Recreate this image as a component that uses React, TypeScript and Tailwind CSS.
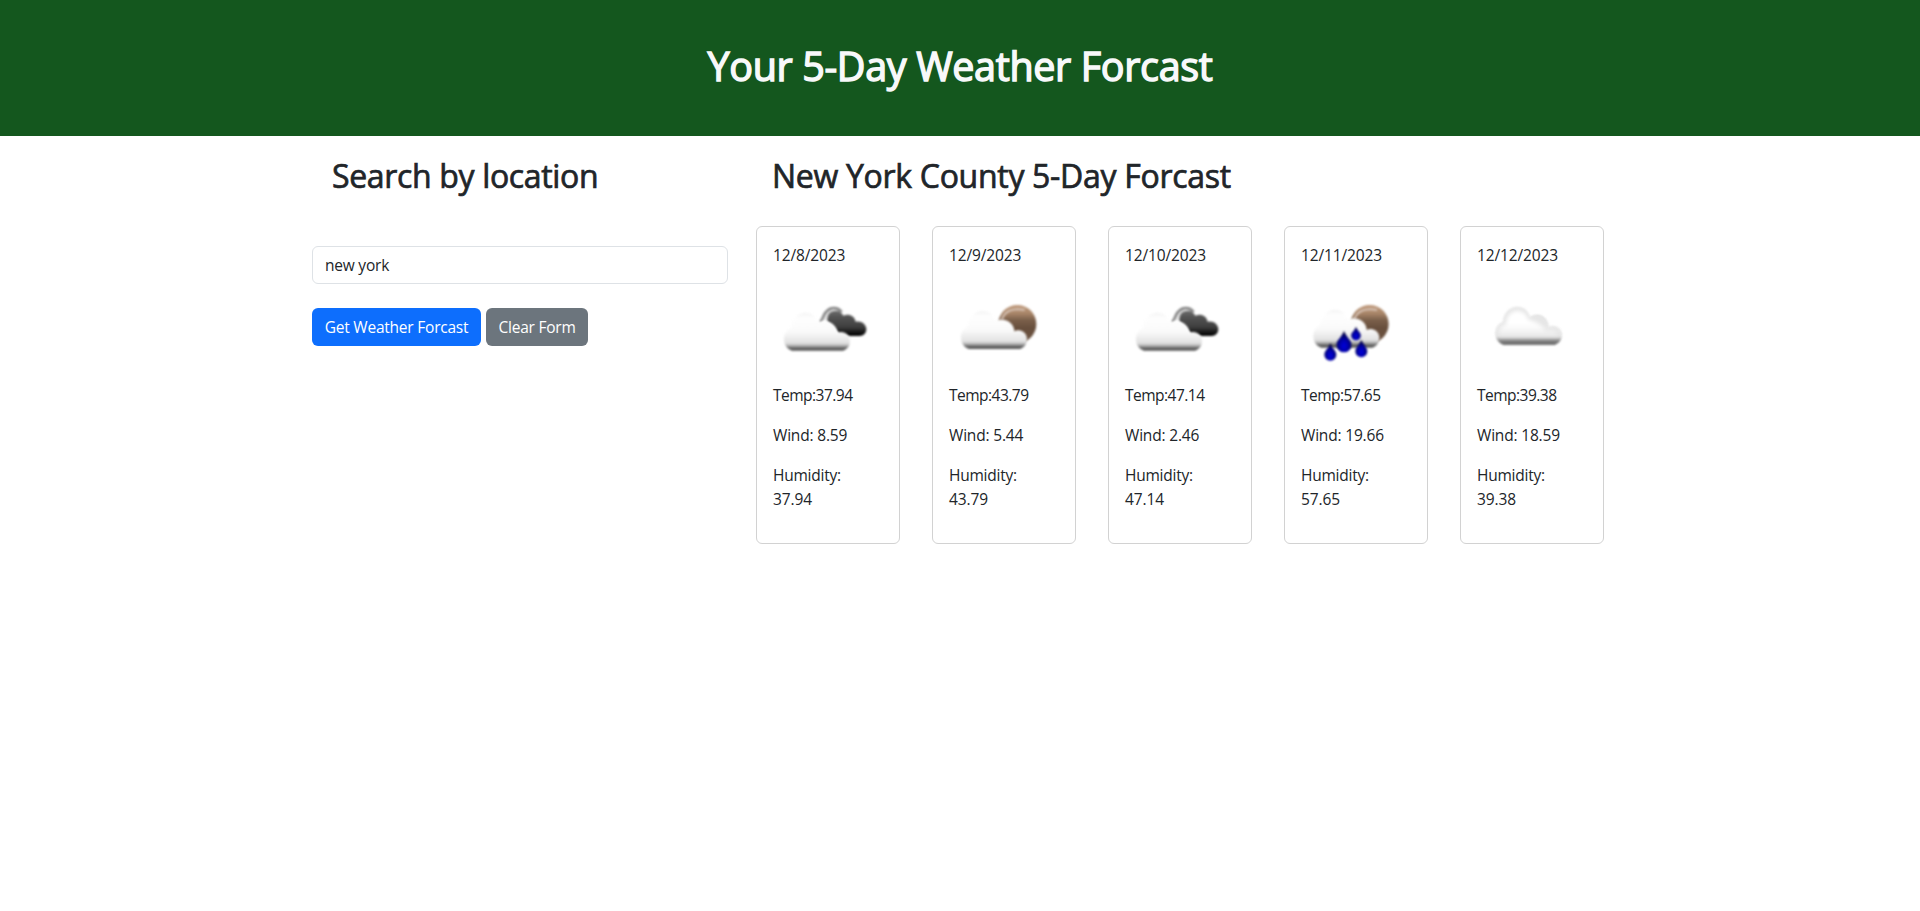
import { useState } from "react";

type Sky = "broken" | "scattered" | "rain" | "cloudy";

type Day = {
  date: string;
  sky: Sky;
  temp: string;
  wind: string;
  humidity: string;
};

const days: Day[] = [
  { date: "12/8/2023", sky: "broken", temp: "37.94", wind: "8.59", humidity: "37.94" },
  { date: "12/9/2023", sky: "scattered", temp: "43.79", wind: "5.44", humidity: "43.79" },
  { date: "12/10/2023", sky: "broken", temp: "47.14", wind: "2.46", humidity: "47.14" },
  { date: "12/11/2023", sky: "rain", temp: "57.65", wind: "19.66", humidity: "57.65" },
  { date: "12/12/2023", sky: "cloudy", temp: "39.38", wind: "18.59", humidity: "39.38" },
];

const cloudPath =
  "M72 177C55 172 46 155 48 137C50 122 58 114 70 108C70 85 88 63 113 63C132 63 146 75 151 93C163 86 182 87 193 96C203 104 208 113 208 124C226 115 246 128 246 147C246 160 240 172 225 177Z";

function Cloud({ id, x = 0, y = 0 }: { id: string; x?: number; y?: number }) {
  return (
    <g transform={`translate(${x} ${y})`}>
      <path d={cloudPath} fill={`url(#${id}-cloud)`} filter={`url(#${id}-soft)`} />
    </g>
  );
}

function Sun({ id, cx, cy }: { id: string; cx: number; cy: number }) {
  return (
    <g filter={`url(#${id}-soft)`}>
      <circle cx={cx} cy={cy} r="57" fill={`url(#${id}-sun)`} />
      <path
        d={`M${cx - 46} ${cy - 14}C${cx - 38} ${cy - 38} ${cx - 14} ${cy - 50} ${cx + 22} ${cy - 42}`}
        fill="none"
        stroke="#d6c3b6"
        strokeWidth="6"
      />
    </g>
  );
}

function Drop({ id, x, y, w, h }: { id: string; x: number; y: number; w: number; h: number }) {
  const r = w / 2;
  return (
    <path
      d={`M${x} ${y}C${x + r * 0.35} ${y + h * 0.32} ${x + r} ${y + h * 0.42} ${x + r} ${y + h - r}A${r} ${r} 0 0 1 ${x - r} ${y + h - r}C${x - r} ${y + h * 0.42} ${x - r * 0.35} ${y + h * 0.32} ${x} ${y}Z`}
      fill={`url(#${id}-drop)`}
      filter={`url(#${id}-soft)`}
    />
  );
}

const viewBoxes: Record<Sky, string> = {
  broken: "9 -21 300 300",
  scattered: "12 -21 300 300",
  rain: "3 -21 300 300",
  cloudy: "6 -21 300 300",
};

function WeatherIcon({ sky, id }: { sky: Sky; id: string }) {
  return (
    <svg viewBox={viewBoxes[sky]} className="block size-[100px]" aria-hidden="true">
      <defs>
        <filter id={`${id}-soft`} x="-20%" y="-20%" width="140%" height="140%" colorInterpolationFilters="sRGB">
          <feGaussianBlur stdDeviation="2.6" />
        </filter>
        <filter id={`${id}-wide`} x="-20%" y="-20%" width="140%" height="140%" colorInterpolationFilters="sRGB">
          <feGaussianBlur stdDeviation="6" />
        </filter>
        <linearGradient id={`${id}-cloud`} gradientUnits="userSpaceOnUse" x1="0" y1="63" x2="0" y2="177">
          <stop offset="0" stopColor="#f4f4f4" />
          <stop offset="0.15" stopColor="#fefefe" />
          <stop offset="0.5" stopColor="#fafafa" />
          <stop offset="0.8" stopColor="#e2e2e2" />
          <stop offset="0.87" stopColor="#b4b4b4" />
          <stop offset="0.93" stopColor="#686868" />
          <stop offset="1" stopColor="#545454" />
        </linearGradient>
        <linearGradient id={`${id}-dark`} x1="0" y1="0" x2="0" y2="1">
          <stop offset="0" stopColor="#6d6d6d" />
          <stop offset="0.25" stopColor="#545454" />
          <stop offset="0.65" stopColor="#3e3e3e" />
          <stop offset="0.88" stopColor="#111" />
          <stop offset="1" stopColor="#000" />
        </linearGradient>
        <linearGradient id={`${id}-sun`} x1="0" y1="0" x2="0" y2="1">
          <stop offset="0" stopColor="#c09a7c" />
          <stop offset="0.22" stopColor="#a98669" />
          <stop offset="0.4" stopColor="#7a5f4a" />
          <stop offset="0.6" stopColor="#684f3d" />
          <stop offset="1" stopColor="#6d5442" />
        </linearGradient>
        <linearGradient id={`${id}-base`} gradientUnits="userSpaceOnUse" x1="0" y1="110" x2="0" y2="177">
          <stop offset="0" stopColor="#f4f4f4" stopOpacity="0" />
          <stop offset="0.65" stopColor="#e2e2e2" stopOpacity="0.85" />
          <stop offset="0.82" stopColor="#8a8a8a" />
          <stop offset="1" stopColor="#5a5a5a" />
        </linearGradient>
        <radialGradient id={`${id}-drop`} cx="0.5" cy="0.7" r="0.6">
          <stop offset="0" stopColor="#0000dc" />
          <stop offset="0.5" stopColor="#0000a8" />
          <stop offset="1" stopColor="#000040" />
        </radialGradient>
      </defs>

      {sky === "broken" && (
        <>
          <g filter={`url(#${id}-soft)`}>
            <path
              d="M150 96C159 90 158 76 168 66C181 51 202 50 215 66"
              fill="none"
              stroke="#858585"
              strokeWidth="8"
            />
            <path
              d="M172 94C170 74 181 62 197 62C208 62 216 68 220 77C235 69 254 77 257 95C274 91 289 103 289 117C289 129 281 138 268 138H215L198 120Z"
              fill={`url(#${id}-dark)`}
            />
            <path d="M164 93C166 77 174 65 190 59" fill="none" stroke="#d2d2d2" strokeWidth="4" />
          </g>
          <Cloud id={id} x={-6} y={5} />
        </>
      )}

      {sky === "scattered" && (
        <>
          <Sun id={id} cx={217} cy={102} />
          <Cloud id={id} />
        </>
      )}

      {sky === "rain" && (
        <>
          <Sun id={id} cx={209} cy={102} />
          <Cloud id={id} x={-8} y={-4} />
          <Drop id={id} x={91} y={160} w={36} h={52} />
          <Drop id={id} x={132} y={123} w={45} h={64} />
          <Drop id={id} x={168} y={110} w={29} h={41} />
          <Drop id={id} x={184} y={149} w={36} h={53} />
        </>
      )}

      {sky === "cloudy" && (
        <g transform="translate(14 -13)">
          <path
            d="M152 101C160 86 183 84 193 96C200 102 201 110 200 119L176 133Z"
            fill="#dfdfdf"
            filter={`url(#${id}-soft)`}
          />
          <path d={cloudPath} fill="#e6e6e6" filter={`url(#${id}-soft)`} />
          <path
            d="M76 170C62 166 56 153 58 141C60 128 68 121 79 116C79 92 94 75 113 75C130 75 142 86 146 102C158 106 172 108 181 117C189 122 194 130 196 138C214 132 234 138 234 150C234 158 230 166 220 170Z"
            fill="#fff"
            filter={`url(#${id}-wide)`}
          />
          <path
            d="M61 113C53 119 49 127 48 137C46 155 55 172 72 177H225C240 172 246 160 246 147C246 136 240 128 232 123L208 124L200 113Z"
            fill={`url(#${id}-base)`}
            filter={`url(#${id}-soft)`}
          />
        </g>
      )}
    </svg>
  );
}

function ForecastCard({ day, id }: { day: Day; id: string }) {
  return (
    <article className="flex h-[318px] w-36 flex-col rounded-md border border-[#d2d2d2] bg-white p-4">
      <p className="mb-4 tracking-[-0.12px]">{day.date}</p>
      <WeatherIcon sky={day.sky} id={id} />
      <p className="mb-4 tracking-[-0.52px]">Temp:{day.temp}</p>
      <p className="mb-4 tracking-[-0.18px]">Wind: {day.wind}</p>
      <p className="tracking-[-0.22px]">Humidity:</p>
      <p className="tracking-[-0.1px]">{day.humidity}</p>
    </article>
  );
}

export default function App() {
  const [location, setLocation] = useState("new york");

  return (
    <div className="min-h-screen bg-white font-['Open_Sans','Noto_Sans',sans-serif] text-[15.5px] leading-6 text-[#212529]">
      <header className="flex h-[136px] justify-center bg-[#14571e] pt-[42px]">
        <h1 className="text-[39.5px] leading-12 font-normal tracking-[-0.35px] whitespace-nowrap text-[#f8f9fa] [-webkit-text-stroke:1.4px_#f8f9fa]">
          Your 5-Day Weather Forcast
        </h1>
      </header>

      <main className="mx-auto flex w-[1320px] pl-3">
        <section className="w-[416px] pt-[21px]">
          <h2 className="ml-5 text-[32px] leading-[38px] font-normal tracking-[-0.34px] whitespace-nowrap [-webkit-text-stroke:0.7px_#212529]">
            Search by location
          </h2>
          <form className="mt-[51px]" onSubmit={(event) => event.preventDefault()}>
            <input
              type="text"
              aria-label="Location"
              value={location}
              onChange={(event) => setLocation(event.target.value)}
              className="block h-[38px] w-full rounded-md border border-[#dee2e6] bg-white px-3 tracking-[-0.22px] outline-none"
            />
            <div className="mt-6 flex gap-[5px]">
              <button
                type="submit"
                className="h-[38px] w-[169px] rounded-md bg-[#0d6efd] tracking-[-0.22px] whitespace-nowrap text-white"
              >
                Get Weather Forcast
              </button>
              <button
                type="button"
                onClick={() => setLocation("")}
                className="h-[38px] w-[102px] rounded-md bg-[#6c757d] tracking-[-0.22px] whitespace-nowrap text-white"
              >
                Clear Form
              </button>
            </div>
          </form>
        </section>

        <section className="ml-7 pt-[21px]">
          <h2 className="ml-4 text-[32px] leading-[38px] font-normal tracking-[-0.3px] whitespace-nowrap [-webkit-text-stroke:0.7px_#212529]">
            New York County 5-Day Forcast
          </h2>
          <div className="mt-[31px] flex gap-8">
            {days.map((day, index) => (
              <ForecastCard key={day.date} day={day} id={`sky${index}`} />
            ))}
          </div>
        </section>
      </main>
    </div>
  );
}
